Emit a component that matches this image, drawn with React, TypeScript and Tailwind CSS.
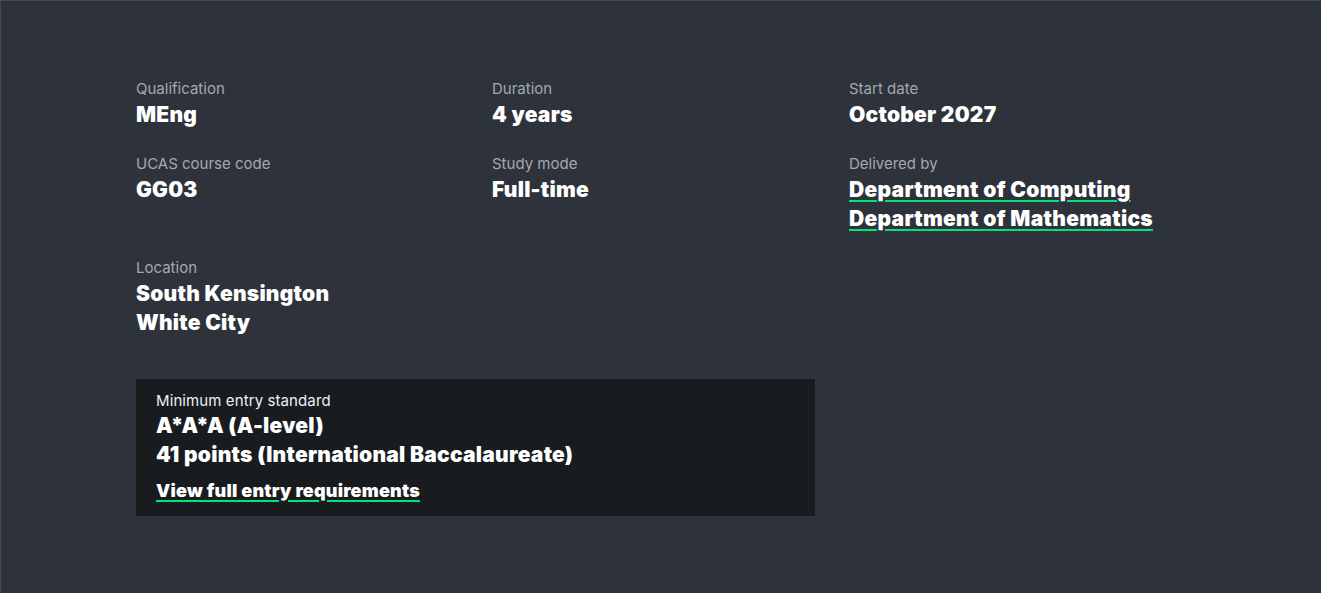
import React from 'react';

interface Fact {
  label: string;
  values: string[];
  link?: boolean;
}

const facts: Fact[] = [
  { label: 'Qualification', values: ['MEng'] },
  { label: 'Duration', values: ['4 years'] },
  { label: 'Start date', values: ['October 2027'] },
  { label: 'UCAS course code', values: ['GG03'] },
  { label: 'Study mode', values: ['Full-time'] },
  {
    label: 'Delivered by',
    values: ['Department of Computing', 'Department of Mathematics'],
    link: true,
  },
  { label: 'Location', values: ['South Kensington', 'White City'] },
];

function FactItem({ label, values, link }: Fact) {
  return (
    <div className="flex flex-col">
      <span className="text-[15px] leading-[22px] text-[#a3a8b0]">{label}</span>
      {values.map((v) =>
        link ? (
          <a
            key={v}
            href="#"
            className="text-[21px] leading-[29px] font-black tracking-[0.3px] text-white underline decoration-[#00e676] decoration-2 underline-offset-[3px]"
          >
            {v}
          </a>
        ) : (
          <span key={v} className="text-[21px] leading-[29px] font-black tracking-[0.25px] text-white">
            {v}
          </span>
        )
      )}
    </div>
  );
}

export default function App() {
  return (
    <div
      className="w-[1321px] h-[593px] bg-[#2e333b] border-l border-t border-[#454b53] pl-[135px] pt-[77px]"
      style={{ fontFamily: 'Inter, "Noto Sans", sans-serif' }}
    >
      {/* key facts */}
      <div className="grid grid-cols-[356px_357px_340px] gap-y-6">
        {facts.map((f) => (
          <FactItem key={f.label} {...f} />
        ))}
      </div>

      {/* entry standard */}
      <div className="mt-[42px] w-[679px] bg-[#191c1f] px-5 pt-[11px] pb-[11px] flex flex-col">
        <span className="text-[15px] leading-[21px] tracking-[0.1px] text-[#eef0f2]">Minimum entry standard</span>
        <span className="text-[21px] leading-[29px] font-black tracking-[0.25px] text-white">A*A*A (A-level)</span>
        <span className="text-[21px] leading-[29px] font-black tracking-[0.25px] text-white">
          41 points (International Baccalaureate)
        </span>
        <a
          href="#"
          className="mt-[7px] self-start text-[18px] leading-[29px] font-black tracking-[0.2px] text-white underline decoration-[#00e676] decoration-2 underline-offset-[3px]"
        >
          View full entry requirements
        </a>
      </div>
    </div>
  );
}
